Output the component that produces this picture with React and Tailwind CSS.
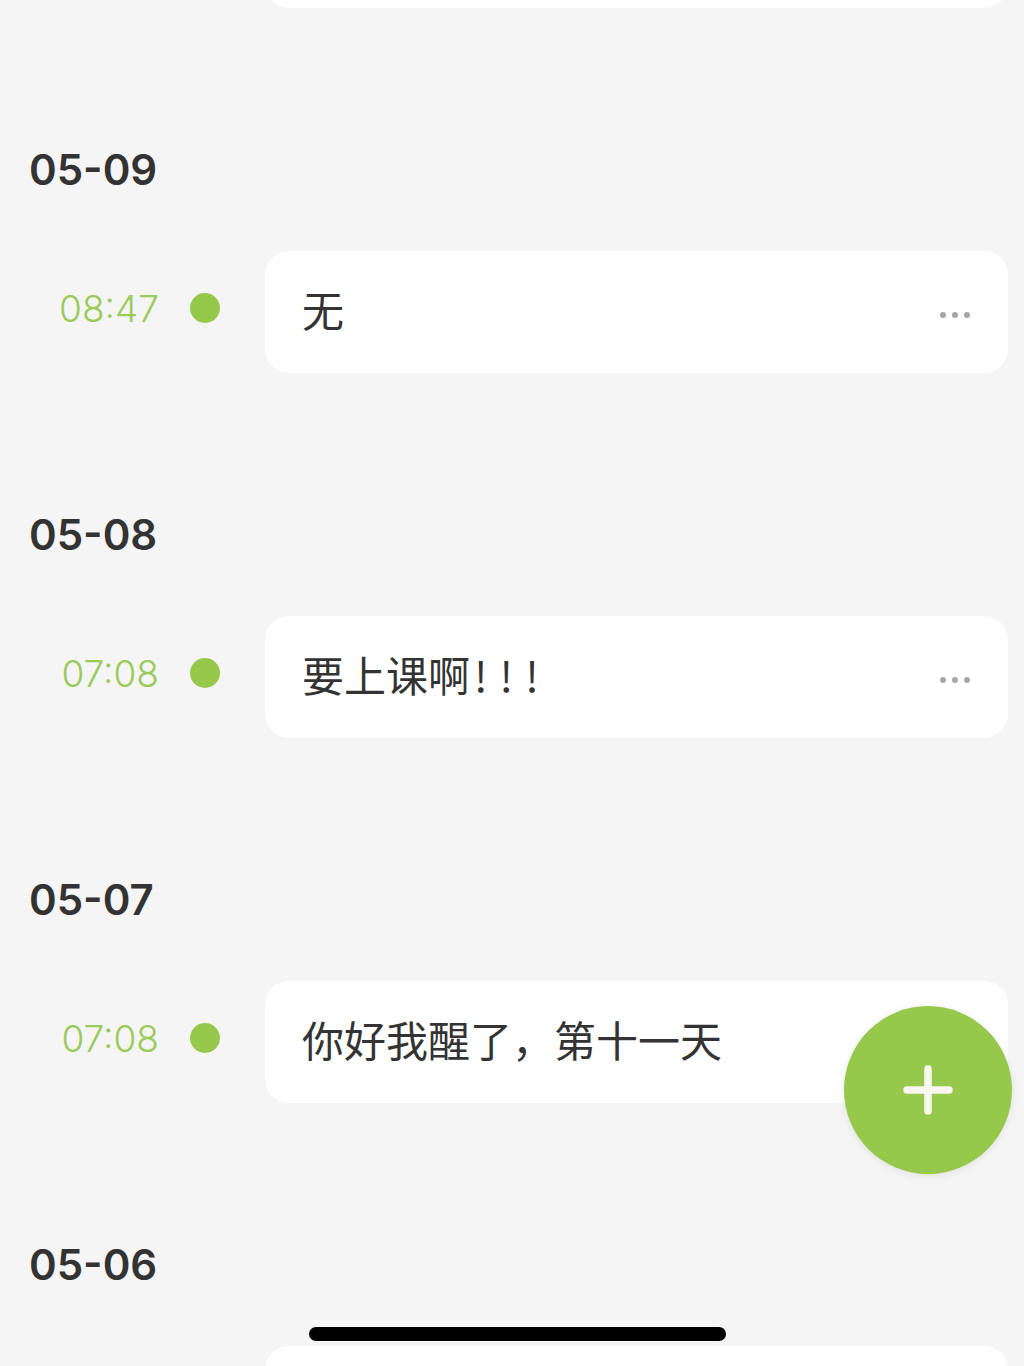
import { Plus } from "lucide-react";

const entries = [
  { date: "05-09", time: "08:47", text: "无" },
  { date: "05-08", time: "07:08", text: "要上课啊", bang: "!!!" },
  { date: "05-07", time: "07:08", text: "你好我醒了，第十一天" },
  { date: "05-06" },
];

function MoreDots() {
  return (
    <div className="mt-[6px] flex items-center gap-[6px]">
      <span className="h-[6px] w-[6px] rounded-full bg-[#a6a6a6]" />
      <span className="h-[6px] w-[6px] rounded-full bg-[#a6a6a6]" />
      <span className="h-[6px] w-[6px] rounded-full bg-[#a6a6a6]" />
    </div>
  );
}

function Entry({ time, text, bang }) {
  return (
    <div className="flex items-center">
      <div className="mb-[8px] flex items-center">
        <span className="w-[159px] text-right font-['Inter',sans-serif] text-[37px] font-light leading-none text-[#9acb5a]">
          {time}
        </span>
        <span className="ml-[31px] h-[30px] w-[30px] rounded-full bg-[#95c84b]" />
      </div>
      <div className="ml-[45px] mr-[16px] flex h-[122px] flex-1 items-center justify-between rounded-[24px] bg-white pl-[37px] pr-[38px]">
        <p className="mb-[6px] font-['Noto_Sans_CJK_SC',sans-serif] text-[42px] leading-none text-[#333333]">
          {text}
          {bang && <span className="ml-[4px] tracking-[12px]">{bang}</span>}
        </p>
        {text && <MoreDots />}
      </div>
    </div>
  );
}

export default function App() {
  return (
    <div className="relative h-[1366px] w-full overflow-hidden bg-[#f5f5f5]">
      <div className="flex flex-col">
        <div className="-mt-[114px] ml-[265px] mr-[16px] h-[122px] rounded-[24px] bg-white" />
        {entries.map((e) => (
          <section key={e.date} className="mt-[138px] flex flex-col">
            <h2 className="pl-[29px] font-['Inter',sans-serif] text-[42px] font-semibold leading-[48px] text-[#333333]">
              {e.date}
            </h2>
            <div className="mt-[57px]">
              <Entry time={e.time} text={e.text} bang={e.bang} />
            </div>
          </section>
        ))}
      </div>

      <button className="absolute left-[844px] top-[1006px] flex h-[168px] w-[168px] items-center justify-center rounded-full bg-[#95c84b] shadow-[0_2px_8px_rgba(0,0,0,0.08)]">
        <Plus size={72} strokeWidth={2.5} className="text-[#faf6f2]" />
      </button>

      <div className="absolute left-[309px] top-[1327px] h-[14px] w-[417px] rounded-full bg-black" />
    </div>
  );
}
